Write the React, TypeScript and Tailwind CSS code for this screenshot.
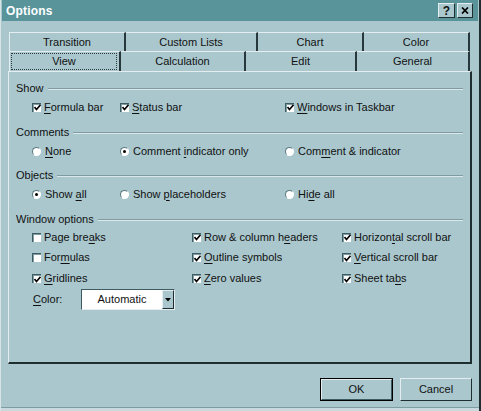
import React from 'react'

const FONT = { fontFamily: '"Liberation Sans", Arial, sans-serif' }

function Label({ text, u }: { text: string; u: number }) {
  return (
    <span>
      {text.slice(0, u)}
      <span className="underline underline-offset-[2px]">{text[u]}</span>
      {text.slice(u + 1)}
    </span>
  )
}

function Check({ text, u, checked }: { text: string; u: number; checked?: boolean }) {
  return (
    <div className="flex items-center gap-[3px] h-full">
      <div className="w-[9px] h-[9px] bg-white border-t border-l border-[#3d5c62] border-r-white border-b-white shadow-[inset_1px_1px_0_#7e9ea4] flex items-center justify-center">
        {checked && (
          <svg width="7" height="7" viewBox="0 0 7 7">
            <path d="M0.5 3 L2.5 5.5 L6.5 0.8" stroke="#000" strokeWidth="1.6" fill="none" />
          </svg>
        )}
      </div>
      <Label text={text} u={u} />
    </div>
  )
}

function Radio({ text, u, checked }: { text: string; u: number; checked?: boolean }) {
  return (
    <div className="flex items-center gap-[4px] h-full">
      <div className="w-[9px] h-[9px] rounded-full bg-white border border-[#5b7a80] border-r-white border-b-white flex items-center justify-center">
        {checked && <div className="w-[3px] h-[3px] rounded-full bg-black" />}
      </div>
      <Label text={text} u={u} />
    </div>
  )
}

function Group({ title, className }: { title: string; className: string }) {
  return (
    <div className={`flex items-center h-[16px] pl-[7px] pr-[7px] ${className}`}>
      <span className="pr-[4px]">{title}</span>
      <div className="flex-1 border-t border-[#7e9ca2] border-b border-b-[#dbe8ea] h-0 mt-[1px]" />
    </div>
  )
}

function Tab({ label, w, first }: { label: string; w: string; first?: boolean }) {
  return (
    <div
      className={`${w} h-full flex items-center justify-center border-t border-[#e4eef0] border-r-2 border-r-[#26383c] ${first ? 'border-l border-l-[#e4eef0]' : ''}`}
    >
      {label}
    </div>
  )
}

export default function App() {
  return (
    <div
      style={FONT}
      className="w-[481px] h-[411px] bg-[#a9c7cd] text-[11px] text-[#111] overflow-hidden relative border-l border-[#d6e4e6] border-r-2 border-r-[#1e2e31]"
    >
      {/* title bar */}
      <div className="h-[21px] bg-[#58949a] flex items-center justify-between pl-[4px] pr-[5px] mx-[1px]">
        <span className="text-white font-bold text-[12px] tracking-[0.2px]">Options</span>
        <div className="flex gap-[2px]">
          <div className="w-[17px] h-[15px] bg-[#a9c7cd] border border-[#e4eef0] border-r-[#1e2e31] border-b-[#1e2e31] flex items-center justify-center font-bold text-[12px] leading-none">?</div>
          <div className="w-[16px] h-[15px] bg-[#a9c7cd] border border-[#e4eef0] border-r-[#1e2e31] border-b-[#1e2e31] flex items-center justify-center">
            <svg width="8" height="7" viewBox="0 0 8 7">
              <path d="M1 0.5 L7 6.5 M7 0.5 L1 6.5" stroke="#000" strokeWidth="1.7" />
            </svg>
          </div>
        </div>
      </div>

      {/* tabs */}
      <div className="pl-[8px] pt-[10px]">
        <div className="flex h-[20px] pt-[1px]">
          <Tab label="Transition" w="w-[117px]" first />
          <Tab label="Custom Lists" w="w-[132px]" />
          <Tab label="Chart" w="w-[106px]" />
          <Tab label="Color" w="w-[106px]" />
        </div>
        <div className="flex h-[20px]">
          <div className="w-[112px] h-full border-t border-l border-[#e4eef0] border-r-2 border-r-[#26383c] p-[1px] pr-[2px]">
            <div className="w-full h-full border border-dotted border-[#2a3c40] flex items-center justify-center">View</div>
          </div>
          <Tab label="Calculation" w="w-[125px]" />
          <Tab label="Edit" w="w-[111px]" />
          <Tab label="General" w="w-[113px]" />
        </div>
      </div>

      {/* panel */}
      <div className="ml-[7px] w-[464px] h-[293px] border-t border-l border-[#e4eef0] border-r-2 border-r-[#1e2e31] border-b-2 border-b-[#1e2e31] pt-[8px]">
        <Group title="Show" className="" />
        <div className="grid grid-cols-[88px_165px_1fr] pl-[23px] h-[20px] mt-[1px]">
          <Check text="Formula bar" u={0} checked />
          <Check text="Status bar" u={0} checked />
          <Check text="Windows in Taskbar" u={0} checked />
        </div>

        <Group title="Comments" className="mt-[7px]" />
        <div className="grid grid-cols-[88px_165px_1fr] pl-[23px] h-[20px] mt-[1px]">
          <Radio text="None" u={0} />
          <Radio text="Comment indicator only" u={8} checked />
          <Radio text="Comment & indicator" u={3} />
        </div>

        <Group title="Objects" className="mt-[6px]" />
        <div className="grid grid-cols-[88px_165px_1fr] pl-[23px] h-[20px] mt-[1px]">
          <Radio text="Show all" u={5} checked />
          <Radio text="Show placeholders" u={5} />
          <Radio text="Hide all" u={2} />
        </div>

        <Group title="Window options" className="mt-[7px]" />
        <div className="grid grid-cols-[160px_150px_1fr] grid-rows-[20px_21px_21px] pl-[23px]">
          <Check text="Page breaks" u={8} />
          <Check text="Row & column headers" u={14} checked />
          <Check text="Horizontal scroll bar" u={7} checked />
          <Check text="Formulas" u={3} />
          <Check text="Outline symbols" u={0} checked />
          <Check text="Vertical scroll bar" u={0} checked />
          <Check text="Gridlines" u={0} checked />
          <Check text="Zero values" u={0} checked />
          <Check text="Sheet tabs" u={8} checked />
        </div>

        <div className="flex items-center pl-[24px] h-[21px]">
          <span className="w-[48px]">
            <Label text="Color:" u={0} />
          </span>
          <div className="w-[94px] h-full bg-white border border-[#3d5c62] border-r-[#e4eef0] border-b-[#e4eef0] flex">
            <div className="flex-1 flex items-center justify-center">Automatic</div>
            <div className="w-[12px] h-full bg-[#a9c7cd] border border-[#e4eef0] border-r-[#1e2e31] border-b-[#1e2e31] flex items-center justify-center">
              <svg width="6" height="4" viewBox="0 0 6 4">
                <path d="M0 0 H6 L3 3.5 Z" fill="#000" />
              </svg>
            </div>
          </div>
        </div>
      </div>

      {/* buttons */}
      <div className="flex justify-end gap-[7px] pr-[7px] pt-[14px]">
        <div className="w-[73px] h-[23px] border border-black">
          <div className="w-full h-full border border-[#e4eef0] border-r-[#3d5c62] border-b-[#3d5c62] flex items-center justify-center">OK</div>
        </div>
        <div className="w-[72px] h-[23px] border border-[#e4eef0] border-r-[#1e2e31] border-b-[#1e2e31] flex items-center justify-center">Cancel</div>
      </div>

      <div className="absolute left-0 right-0 bottom-0 h-[4px] border-t border-[#7e9ca2] bg-[#c8dadd]" />
    </div>
  )
}
